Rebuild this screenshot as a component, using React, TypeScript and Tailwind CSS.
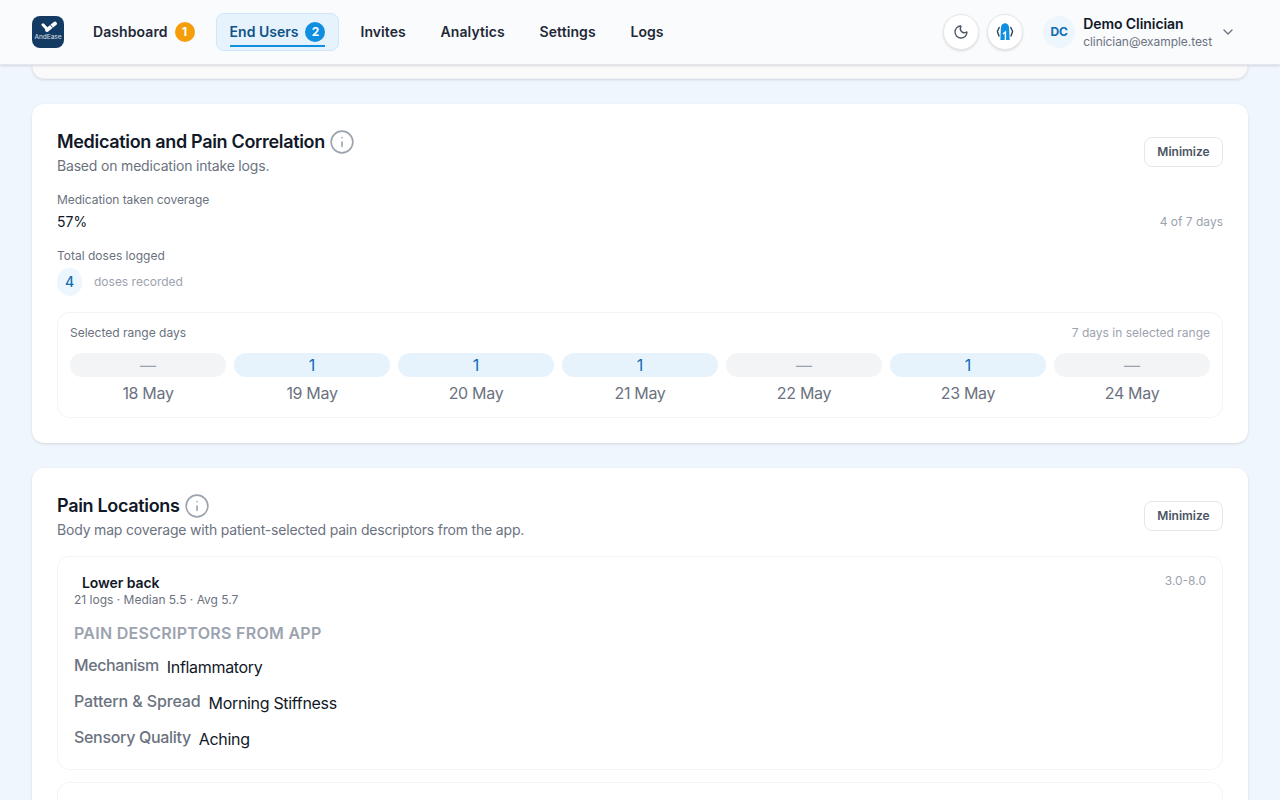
import { ChevronDown, Info, Moon } from "lucide-react";

const days = [
  { label: "18 May", count: null },
  { label: "19 May", count: 1 },
  { label: "20 May", count: 1 },
  { label: "21 May", count: 1 },
  { label: "22 May", count: null },
  { label: "23 May", count: 1 },
  { label: "24 May", count: null },
];

const descriptors = [
  { name: "Mechanism", value: "Inflammatory", nameClass: "tracking-[-0.025em]" },
  { name: "Pattern & Spread", value: "Morning Stiffness", nameClass: "tracking-[-0.008em]" },
  { name: "Sensory Quality", value: "Aching", nameClass: "tracking-[-0.02em]" },
];

function Logo() {
  return (
    <div className="w-8 h-8 rounded-lg bg-[#123a63] flex flex-col items-center justify-center shrink-0">
      <svg width="17" height="12" viewBox="0 0 17 12" fill="none" className="-mt-[2px] ml-[3px]">
        <path d="M2 3.8 L5.8 7.8" stroke="#fff" strokeWidth="3" strokeLinecap="round" />
        <path d="M6 9 L14 2.6" stroke="#fff" strokeWidth="3.8" strokeLinecap="round" />
        <path d="M9.2 3.6 L11.6 6.6" stroke="#123a63" strokeWidth="0.9" />
      </svg>
      <span className="text-[6.5px] leading-[7px] text-white/85 mt-[1px]">AndEase</span>
    </div>
  );
}

function AlarmIcon() {
  return (
    <svg width="18" height="20" viewBox="0 0 18 20" fill="none">
      <path d="M3.2 5.5 L1.4 9.5 L3 14 M14.8 5.5 L16.6 9.5 L15 14" stroke="#374151" strokeWidth="1.4" strokeLinecap="round" strokeLinejoin="round" />
      <path d="M9 1.2 C11.8 1.2 13.2 3.4 13.2 7 L13.6 18 L4.4 18 L4.8 7 C4.8 3.4 6.2 1.2 9 1.2 Z" fill="#0f8fe0" />
      <path d="M7 12 L9.4 10 L9.4 18.4" stroke="#fff" strokeWidth="1.4" fill="none" />
    </svg>
  );
}

function NavItem({ label, badge }: { label: string; badge?: string }) {
  return (
    <div className="flex items-center gap-[7px] px-3.5 h-9 text-sm font-semibold tracking-[0.006em] text-[#1f2937]">
      {label}
      {badge && (
        <span className="w-5 h-5 rounded-full bg-[#f59e0b] text-white text-xs font-bold flex items-center justify-center">
          {badge}
        </span>
      )}
    </div>
  );
}

function CardHeader({ title, subtitle }: { title: string; subtitle: string }) {
  return (
    <div className="flex items-start justify-between">
      <div>
        <div className="flex items-center gap-1 h-[26px]">
          <h2 className="text-lg leading-[26px] font-semibold tracking-[-0.018em] text-[#111827]">{title}</h2>
          <Info size={26} strokeWidth={1.5} className="text-[#9ca3af]" />
        </div>
        <p className="text-sm leading-5 tracking-[-0.013em] text-[#6b7280] mt-[1px]">{subtitle}</p>
      </div>
      <button className="mt-[8px] h-[30px] w-[79px] rounded-lg border border-[#e5e7eb] bg-white text-xs font-semibold text-[#4b5563]">
        Minimize
      </button>
    </div>
  );
}

export default function App() {
  return (
    <div className="h-[800px] overflow-hidden bg-[#eff6fd] font-['Inter',sans-serif]">
      <header className="h-[65px] bg-[#f9fbfd] border-b border-[#e3e8ef] shadow-sm flex items-center px-8 relative z-10">
        <Logo />
        <nav className="flex items-center ml-[15px]">
          <NavItem label="Dashboard" badge="1" />
          <div className="relative flex items-center gap-[7px] px-[13px] h-[38px] ml-[7px] rounded-lg border border-[#cfe6fa] bg-[#e6f2fc] text-sm font-semibold text-[#0f5288]">
            End Users
            <span className="w-5 h-5 rounded-full bg-[#0f8fe0] text-white text-xs font-bold flex items-center justify-center">
              2
            </span>
            <span className="absolute left-[13px] right-[13px] bottom-[3px] h-[2px] bg-[#0f8fe0]" />
          </div>
          <div className="flex items-center gap-[6.7px] ml-[7px]">
            <NavItem label="Invites" />
            <NavItem label="Analytics" />
            <NavItem label="Settings" />
            <NavItem label="Logs" />
          </div>
        </nav>
        <div className="ml-auto flex items-center">
          <button className="w-9 h-9 rounded-full bg-white border border-[#e5e7eb] shadow-sm flex items-center justify-center text-[#4b5563]">
            <Moon size={16} />
          </button>
          <button className="w-9 h-9 ml-2 rounded-full bg-white border border-[#e5e7eb] shadow-sm flex items-center justify-center">
            <AlarmIcon />
          </button>
          <div className="w-8 h-8 ml-5 rounded-full bg-[#eef6fd] text-[#0f6cb5] text-xs font-bold flex items-center justify-center">
            DC
          </div>
          <div className="ml-2 mr-2">
            <div className="text-sm leading-5 font-semibold tracking-[-0.005em] text-[#111827]">Demo Clinician</div>
            <div className="text-xs leading-4 tracking-[-0.005em] text-[#6b7280]">clinician@example.test</div>
          </div>
          <ChevronDown size={16} className="text-[#6b7280] mr-3" />
        </div>
      </header>

      <main className="px-8 flex flex-col gap-[25px]">
        <div className="h-[14px] rounded-b-xl bg-[#fafafa] border border-t-0 border-[#eef0f3] shadow" />

        <section className="h-[339px] rounded-xl bg-white shadow px-[25px] pt-[25px]">
          <CardHeader title="Medication and Pain Correlation" subtitle="Based on medication intake logs." />
          <div className="mt-[14px] text-xs leading-5 tracking-[-0.005em] text-[#6b7280]">Medication taken coverage</div>
          <div className="flex items-center justify-between mt-[2px]">
            <span className="text-sm leading-5 text-[#111827]">57%</span>
            <span className="text-xs text-[#9ca3af]">4 of 7 days</span>
          </div>
          <div className="mt-[14px] text-xs leading-5 text-[#6b7280]">Total doses logged</div>
          <div className="flex items-center gap-3 mt-[2px]">
            <span className="w-[25px] h-7 rounded-full bg-[#eef6fd] text-sm text-[#0f6cb5] font-medium flex items-center justify-center">
              4
            </span>
            <span className="text-xs text-[#9ca3af]">doses recorded</span>
          </div>
          <div className="mt-[16px] rounded-xl border border-[#f3f4f6] px-3 pt-[10px] h-[106px]">
            <div className="flex justify-between text-xs leading-5 text-[#6b7280]">
              <span>Selected range days</span>
              <span className="text-[#9ca3af]">7 days in selected range</span>
            </div>
            <div className="grid grid-cols-7 gap-2 mt-[10px]">
              {days.map((d) => (
                <div key={d.label} className="flex flex-col items-center gap-1">
                  <div
                    className={
                      d.count
                        ? "w-full h-6 rounded-full bg-[#e6f2fc] text-[#0f6cb5] text-base flex items-center justify-center"
                        : "w-full h-6 rounded-full bg-[#f3f4f6] text-[#9ca3af] text-base flex items-center justify-center"
                    }
                  >
                    {d.count ?? "—"}
                  </div>
                  <div className="text-base leading-6 tracking-[-0.02em] text-[#6b7280]">{d.label}</div>
                </div>
              ))}
            </div>
          </div>
        </section>

        <section className="rounded-xl bg-white shadow px-[25px] pt-[25px] h-[400px]">
          <CardHeader
            title="Pain Locations"
            subtitle="Body map coverage with patient-selected pain descriptors from the app."
          />
          <div className="mt-[16px] h-[214px] rounded-xl border border-[#f3f4f6] px-4 pt-4 relative">
            <div className="flex justify-between">
              <div className="pl-2 text-sm leading-5 font-semibold tracking-[-0.005em] text-[#111827]">Lower back</div>
              <div className="text-xs leading-4 text-[#9ca3af]">3.0-8.0</div>
            </div>
            <div className="text-xs leading-4 text-[#6b7280] -mt-[1px]">21 logs · Median 5.5 · Avg 5.7</div>
            <div className="mt-[13px] text-base leading-6 font-semibold tracking-[0.018em] text-[#9ca3af]">PAIN DESCRIPTORS FROM APP</div>
            <div className="mt-[8px] flex flex-col gap-3">
              {descriptors.map((row) => (
                <div key={row.name} className="flex gap-2 h-6">
                  <span className={row.nameClass + " text-base leading-6 font-medium text-[#6b7280]"}>{row.name}</span>
                  <span className="text-base leading-6 tracking-[-0.02em] text-[#111827] translate-y-[2px]">{row.value}</span>
                </div>
              ))}
            </div>
          </div>
          <div className="mt-[12px] h-20 rounded-xl border border-[#f3f4f6]" />
        </section>
      </main>
    </div>
  );
}
